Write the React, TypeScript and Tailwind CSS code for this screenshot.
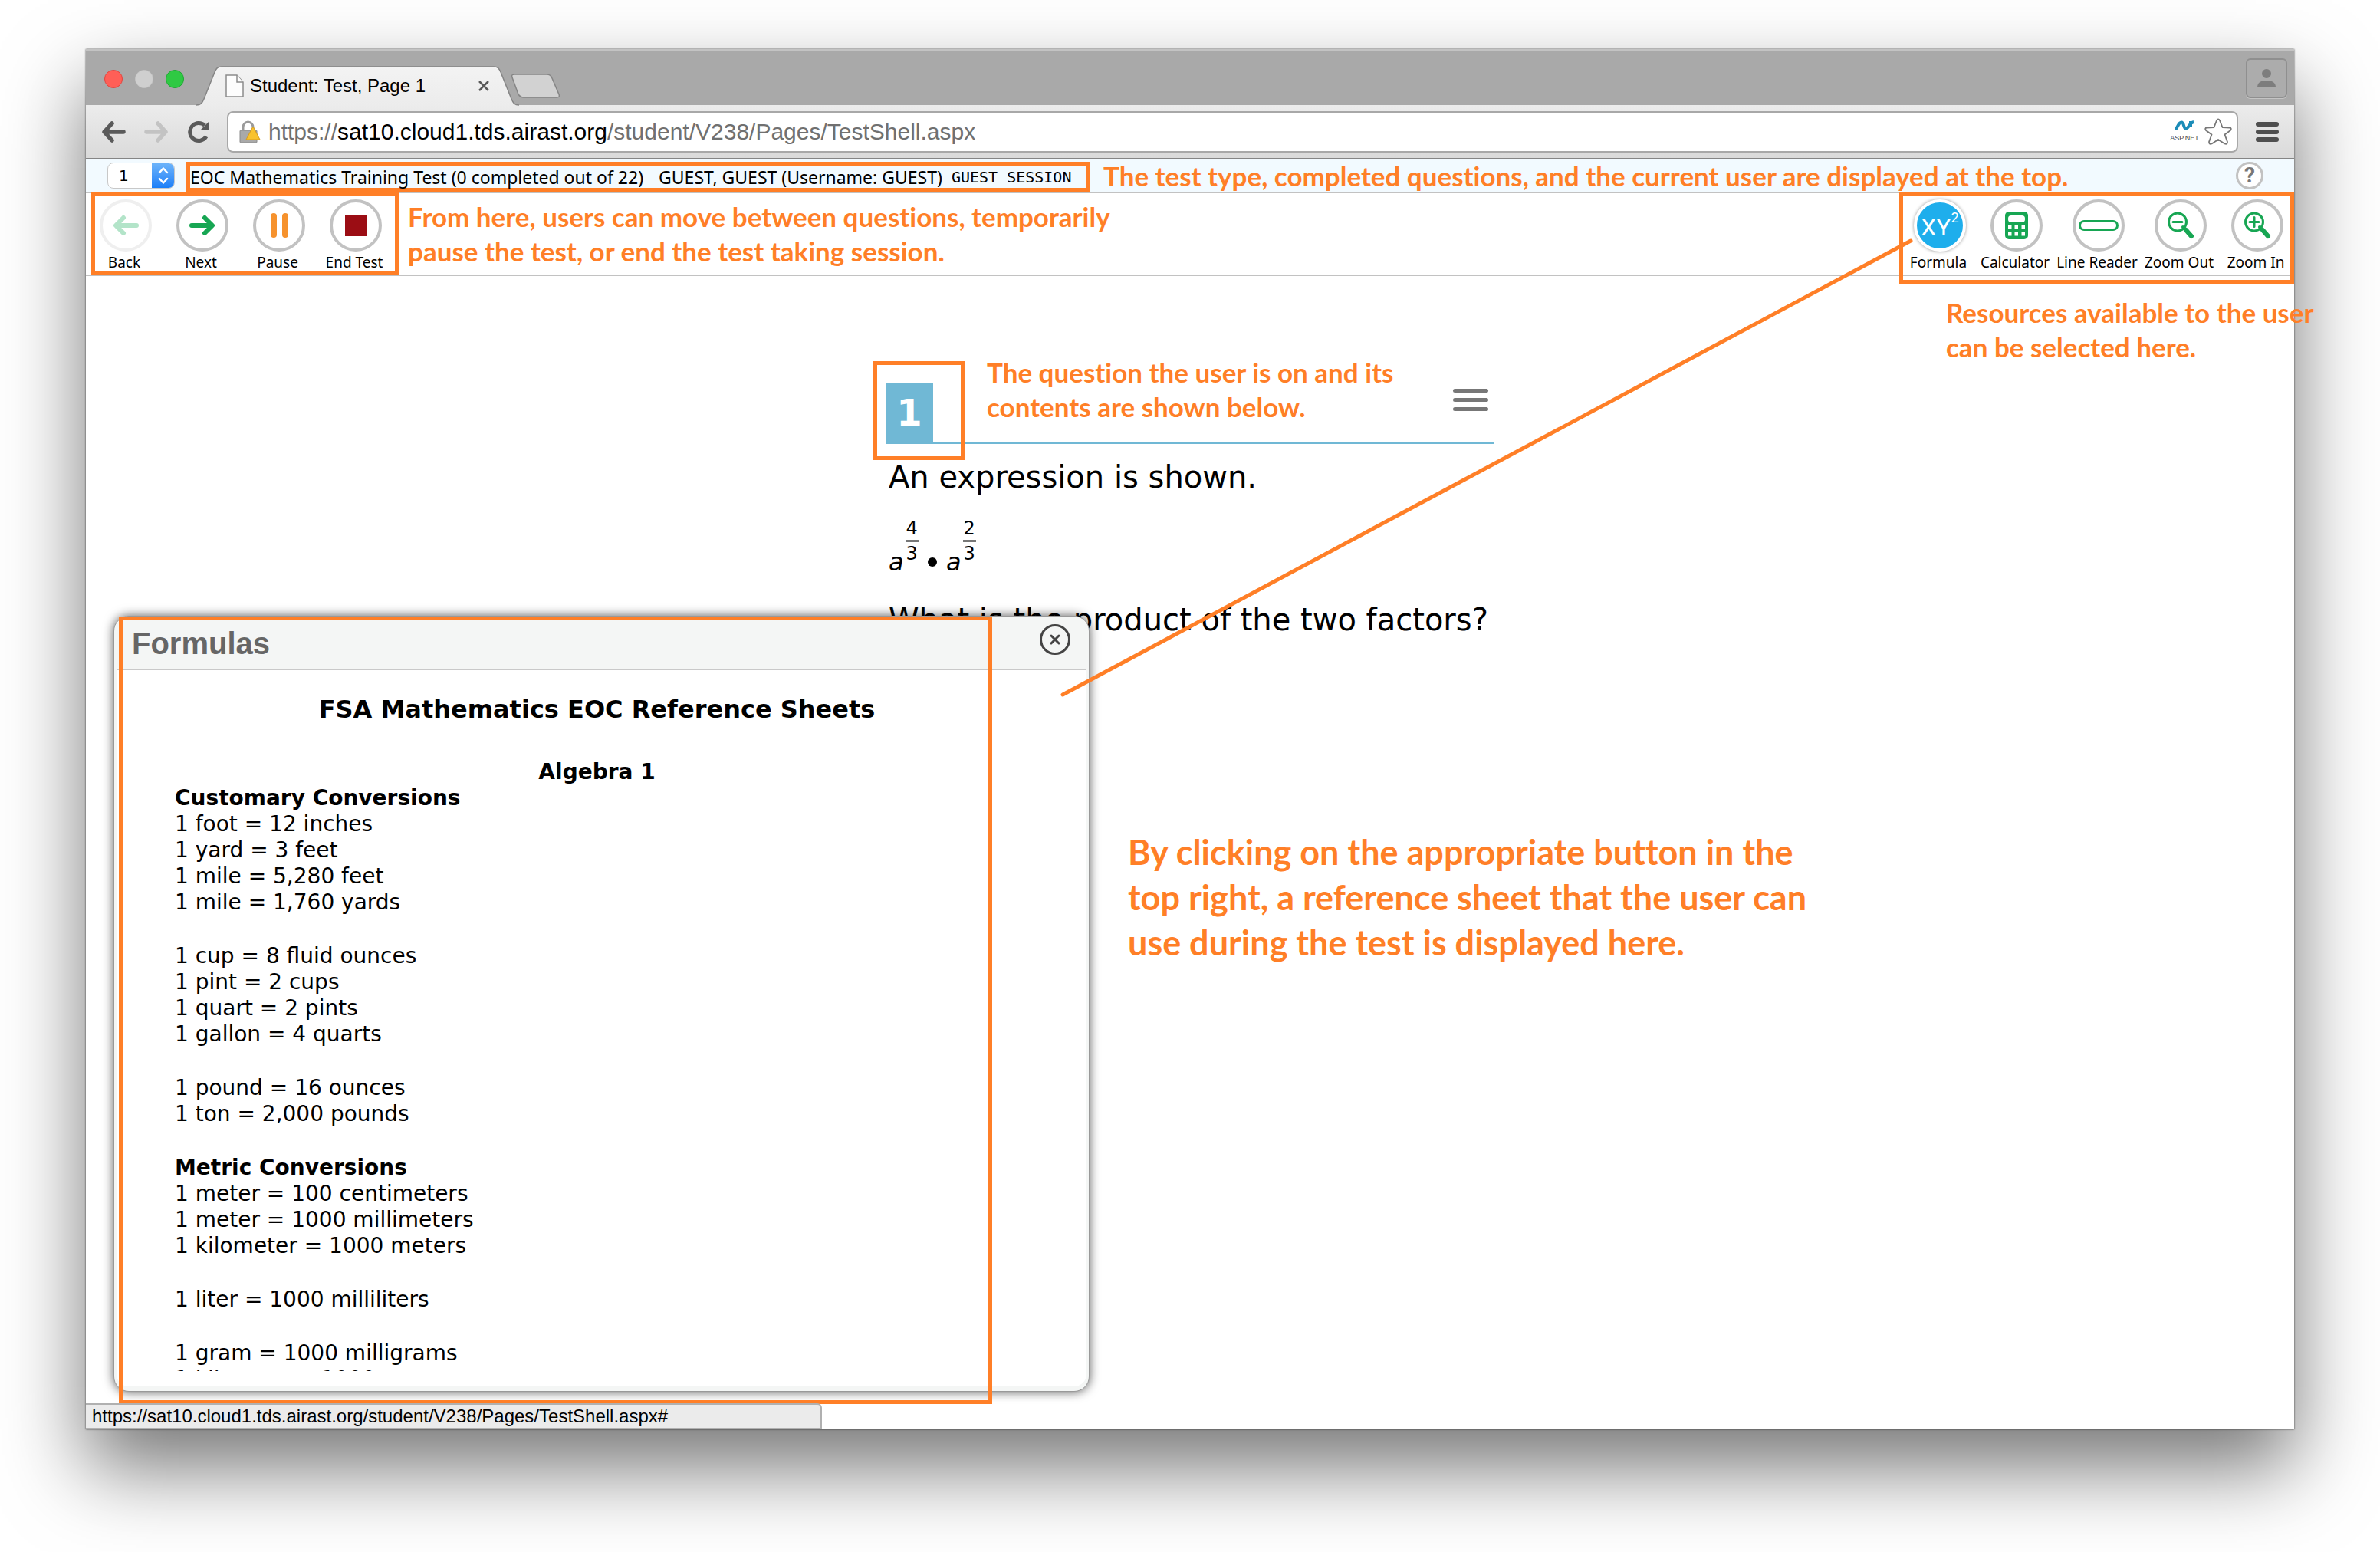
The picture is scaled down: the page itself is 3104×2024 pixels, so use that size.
import React from "react";

const ORANGE_TEXT = "font-['Lato',sans-serif] font-bold text-[#ff7f27] [font-variant-ligatures:none]";
const VERDANA = "font-['Verdana','DejaVu_Sans',sans-serif]";
const LUCIDA = "font-['Lucida_Grande','Noto_Sans',sans-serif]";

function TrafficLights() {
  return (
    <div className="flex items-center gap-4 pl-6 pt-1">
      <button aria-label="Close window" className="size-6 rounded-full border border-[#e2463f] bg-[#ff5f57]" />
      <button aria-label="Minimize window" className="size-6 rounded-full border border-[#c4c4c4] bg-[#cfcfcf]" />
      <button aria-label="Zoom window" className="size-6 rounded-full border border-[#1fa833] bg-[#2fc943]" />
    </div>
  );
}

function TabStrip() {
  return (
    <div className="flex h-[73px] items-stretch bg-[#a9a9a9] shadow-[inset_0_2px_0_#c3c3c3]">
      <TrafficLights />
      <div className="relative ml-4 mt-[22px] flex h-[52px] w-[422px] items-center">
        <svg viewBox="0 0 422 52" className="absolute inset-0 h-full w-full" fill="none" aria-hidden="true">
          <defs>
            <linearGradient id="tab" x1="0" y1="0" x2="0" y2="1">
              <stop offset="0" stopColor="#f3f3f3" />
              <stop offset="1" stopColor="#ececec" />
            </linearGradient>
          </defs>
          <path
            d="M0 51C6 51 8 48 10 43L24 8C26 3 28 1 33 1H388C393 1 395 3 397 8L411 43C413 48 415 51 421 51"
            fill="url(#tab)"
            stroke="#858585"
            strokeWidth="1.5"
          />
        </svg>
        <svg viewBox="0 0 24 30" className="relative ml-[38px] h-[30px] w-6" fill="#fdfdfd" stroke="#8c8c8c" strokeWidth="1.5" aria-hidden="true">
          <path d="M1 1H15L23 10V29H1Z" />
          <path d="M15 1V10H23" />
        </svg>
        <span className="relative ml-2 font-['Liberation_Sans',sans-serif] text-[24px] leading-7 text-black">Student: Test, Page 1</span>
        <button aria-label="Close tab" className="absolute right-9 p-1">
          <svg viewBox="0 0 14 14" className="size-3.5" stroke="#5a5a5a" strokeWidth="2.500" aria-hidden="true">
            <path d="M1 1L13 13M13 1L1 13" />
          </svg>
        </button>
      </div>
      <button aria-label="New tab" className="-ml-3 mt-8 h-8 w-16">
        <svg viewBox="0 0 64 32" className="h-8 w-16" fill="#d2d2d2" stroke="#858585" strokeWidth="1.5" aria-hidden="true">
          <path d="M5 1H47C51 1 53 3 54 6L63 27C64 30 63 31 60 31H17C14 31 12 30 10 27L2 5C1 2 2 1 5 1Z" />
        </svg>
      </button>
      <button aria-label="Profile" className="ml-auto mr-[9px] mt-3 flex h-[52px] w-[54px] items-center justify-center rounded-md border-2 border-[#8f8f8f] bg-[#acacac] shadow-[0_1px_0_#c4c4c4]">
        <svg viewBox="0 0 24 25" className="h-[25px] w-6" fill="#7d7d7d" aria-hidden="true">
          <circle cx="12" cy="6" r="6" />
          <path d="M0 24C0 18 4 15 12 15S24 18 24 24Z" />
        </svg>
      </button>
    </div>
  );
}

function ArrowIcon({ className }: { className: string }) {
  return (
    <svg viewBox="0 0 32 28" className={className} fill="none" stroke="currentColor" strokeWidth="5.5" strokeLinecap="round" strokeLinejoin="round" aria-hidden="true">
      <path d="M14 3L4 14L14 25M5 14H29" />
    </svg>
  );
}

function AddressBar() {
  return (
    <div className="flex h-[71px] items-center border-b-2 border-[#858585] bg-linear-to-b from-[#ececec] to-[#dadada] pl-5">
      <button aria-label="Back" className="text-[#5a5a5a]">
        <ArrowIcon className="h-7 w-8" />
      </button>
      <button aria-label="Forward" disabled className="ml-6 text-[#c3c3c3]">
        <ArrowIcon className="h-7 w-8 rotate-180" />
      </button>
      <button aria-label="Reload" className="ml-6 text-[#5a5a5a]">
        <svg viewBox="0 0 30 30" className="size-[30px]" aria-hidden="true">
          <path d="M25 21A11.5 11.5 0 1 1 23 6.500" fill="none" stroke="currentColor" strokeWidth="5" />
          <path d="M29 1V13H17Z" fill="currentColor" />
        </svg>
      </button>
      <div className="ml-[22px] flex h-[54px] flex-1 items-center rounded-lg border-2 border-[#a8a8a8] bg-white pl-3.5 pr-1.5">
        <svg viewBox="0 0 28 30" className="h-[30px] w-7" aria-hidden="true">
          <path d="M5 14V9A6.500 7 0 0 1 18 9V14" fill="none" stroke="#9a9a9a" strokeWidth="3" />
          <rect x="1" y="13" width="22" height="16" rx="1" fill="#a9a9a9" stroke="#8a8a8a" />
          <path d="M18 8L27 25H9Z" fill="#f8c22e" stroke="#d69b1c" strokeLinejoin="round" />
        </svg>
        <div role="textbox" aria-label="Address" className="ml-2.5 flex-1 font-['Liberation_Sans',sans-serif] text-[30px] leading-9 text-[#707070]">
          https://<span className="text-black">sat10.cloud1.tds.airast.org</span>/student/V238/Pages/TestShell.aspx
        </div>
        <div className="flex w-9 flex-col items-center">
          <svg viewBox="0 0 28 13" className="h-[13px] w-7" fill="none" aria-hidden="true">
            <path d="M2 12C5 10 6 2.500 10 2.500S12 10.500 16 10.500S20 3 26 2M22 1V9" stroke="#1b8cb8" strokeWidth="4" />
          </svg>
          <span className="mt-1 font-['Liberation_Sans',sans-serif] text-[9px] leading-3 text-[#444]">ASP.NET</span>
        </div>
        <button aria-label="Bookmark this page" className="ml-2">
          <svg viewBox="0 0 36 35" className="h-[35px] w-9" fill="#fff" stroke="#777" strokeWidth="1.8" strokeLinejoin="round" aria-hidden="true">
            <path d="M16 3Q18 0 20 3L23.500 12L33 12.500Q36 13 34 16L26.500 21.500L30 31Q30 35 26.500 33.500L18 28L9.500 33.500Q6 35 6 31L9.500 21.500L2 16Q0 13 3 12.500L12.500 12Z" />
          </svg>
        </button>
      </div>
      <button aria-label="Menu" className="ml-[23px] mr-5 flex w-[30px] flex-col gap-1">
        <span className="h-1.5 rounded-full bg-[#4f4f4f]" />
        <span className="h-1.5 rounded-full bg-[#4f4f4f]" />
        <span className="h-1.5 rounded-full bg-[#4f4f4f]" />
      </button>
    </div>
  );
}

function TestHeader() {
  return (
    <div className="flex h-11 items-center border-b-2 border-[#c2c2c2] bg-[#f2faff] pl-7">
      <div className="relative h-[34px] w-[88px] overflow-hidden rounded-lg border border-[#c8c8c8] bg-white">
        <select aria-label="Question number" defaultValue="1" className={`h-full w-full appearance-none bg-transparent pl-3.5 text-[20px] leading-8 text-black ${VERDANA}`}>
          <option>1</option>
          <option>2</option>
          <option>3</option>
        </select>
        <span className="pointer-events-none absolute inset-y-0 right-0 flex w-[29px] items-center justify-center bg-linear-to-b from-[#6bb3fa] to-[#1a7ff8]">
          <svg viewBox="0 0 14 22" className="h-[22px] w-3.5" fill="none" stroke="#fff" strokeWidth="2.500" strokeLinecap="round" strokeLinejoin="round" aria-hidden="true">
            <path d="M2 7L7 1.500L12 7M2 15L7 20.500L12 15" />
          </svg>
        </span>
      </div>
      <div className="ml-[15px] mt-[3px] flex h-[39px] w-[1179px] items-center whitespace-pre border-[5px] border-[#ff7f27] text-black">
        <span className={`text-[23px] leading-7 ${LUCIDA}`}>EOC Mathematics Training Test (0 completed out of 22)</span>
        <span className={`ml-5 text-[23px] leading-7 ${LUCIDA}`}>GUEST, GUEST (Username: GUEST)</span>
        <span className="ml-3 font-['DejaVu_Sans_Mono',monospace] text-[20px] leading-7">GUEST SESSION</span>
      </div>
      <p className={`ml-[17px] whitespace-nowrap text-[35px] leading-10 ${ORANGE_TEXT}`}>
        The test type, completed questions, and the current user are displayed at the top.
      </p>
      <button aria-label="Help" className="ml-auto mr-10 flex size-9 items-center justify-center rounded-full border-[3px] border-[#c2c2c2] bg-white font-['Roboto',sans-serif] text-[28px] font-bold leading-8 text-[#777]">
        ?
      </button>
    </div>
  );
}

function ToolButton({ label, wide, disabled, active, children }: { label: string; wide?: boolean; disabled?: boolean; active?: boolean; children: React.ReactNode }) {
  return (
    <button disabled={disabled} className={`flex flex-col items-center pt-2 ${wide ? "w-[114px]" : "w-[100px]"}`}>
      <span
        className={`ml-1 flex size-[68px] items-center justify-center rounded-full border-4 ${
          active ? "border-white bg-[#1eaeec] shadow-[0_0_4px_#999]" : disabled ? "border-[#efefef] bg-white" : "border-[#c2c2c2] bg-white"
        }`}
      >
        {children}
      </span>
      <span className={`mt-0.5 whitespace-nowrap text-[19px] leading-6 text-black ${LUCIDA}`}>{label}</span>
    </button>
  );
}

function ThickArrow({ className }: { className: string }) {
  return (
    <svg viewBox="0 0 34 26" className={className} fill="none" stroke="currentColor" strokeWidth="6" strokeLinecap="round" strokeLinejoin="round" aria-hidden="true">
      <path d="M20 3L30 13L20 23M3 13H29" />
    </svg>
  );
}

function Magnifier({ plus }: { plus?: boolean }) {
  return (
    <svg viewBox="0 0 36 36" className="size-9" fill="none" stroke="#17a653" strokeLinecap="round" aria-hidden="true">
      <circle cx="14" cy="13.500" r="11.500" strokeWidth="3" />
      <path d="M25 24L32 32" strokeWidth="6" />
      <path d="M21 20L25 24" strokeWidth="4" />
      <path d={plus ? "M8 13.500H20M14 7.500V19.500" : "M8 13.500H20"} strokeWidth="3" />
    </svg>
  );
}

function TestToolbar() {
  return (
    <div className="relative flex h-[108px] items-start justify-between border-b-2 border-[#c2c2c2]">
      <div className="flex">
        <nav aria-label="Test navigation" className="flex">
          <ToolButton label="Back" disabled>
            <ThickArrow className="h-[26px] w-[34px] rotate-180 text-[#b3e4c9]" />
          </ToolButton>
          <ToolButton label="Next">
            <ThickArrow className="h-[26px] w-[34px] text-[#17a653]" />
          </ToolButton>
          <ToolButton label="Pause">
            <span className="flex gap-[7px]">
              <span className="h-8 w-2 rounded-full bg-[#f6922d]" />
              <span className="h-8 w-2 rounded-full bg-[#f6922d]" />
            </span>
          </ToolButton>
          <ToolButton label="End Test">
            <span className="size-7 bg-[#9b0d14]" />
          </ToolButton>
        </nav>
        <p className={`ml-5 mt-2 text-[35px] leading-[45px] ${ORANGE_TEXT}`}>
          From here, users can move between questions, temporarily
          <br />
          pause the test, or end the test taking session.
        </p>
      </div>
      <div role="toolbar" aria-label="Resources" className="flex">
        <ToolButton label="Formula" active>
          <span className="flex font-['Roboto',sans-serif] text-white">
            <span className="pt-1 text-[32px] leading-9">XY</span>
            <sup className="top-0 text-[18px] leading-5">2</sup>
          </span>
        </ToolButton>
        <ToolButton label="Calculator">
          <svg viewBox="0 0 30 36" className="h-9 w-[30px]" aria-hidden="true">
            <rect width="30" height="36" rx="5" fill="#17a653" />
            <rect x="4" y="5" width="22" height="9" rx="4" fill="#fff" />
            <path d="M4 18H8.500V22.500H4ZM12.500 18H17V22.500H12.500ZM21.500 18H26V22.500H21.500ZM4 27H8.500V31.500H4ZM12.500 27H17V31.500H12.500ZM21.500 27H26V31.500H21.500Z" fill="#fff" />
          </svg>
        </ToolButton>
        <ToolButton label="Line Reader" wide>
          <span className="h-3.5 w-[52px] rounded-full border-[3px] border-[#17a653]" />
        </ToolButton>
        <ToolButton label="Zoom Out">
          <Magnifier />
        </ToolButton>
        <ToolButton label="Zoom In">
          <Magnifier plus />
        </ToolButton>
      </div>
      <div className="pointer-events-none absolute -top-px left-[7px] h-[107px] w-[401px] border-[5px] border-[#ff7f27]" />
      <div className="pointer-events-none absolute -top-px right-0 h-[119px] w-[515px] border-[5px] border-[#ff7f27]" />
    </div>
  );
}

function Power({ top }: { top: string }) {
  return (
    <span className="flex items-end">
      <i className="text-[32px] leading-8">a</i>
      <span className="mb-4 ml-0.5 flex flex-col items-center text-[24px] leading-[22px]">
        <span className="border-b-[3px] border-[#777] px-px pb-1">{top}</span>
        <span className="pt-1">3</span>
      </span>
    </span>
  );
}

function Question() {
  return (
    <main className={`mx-auto w-[794px] pt-[111px] text-black ${VERDANA}`}>
      <div className="relative flex h-[108px] items-end justify-between border-b-[3px] border-[#70b8d5]">
        <h1 className="flex h-[76px] w-[62px] items-center justify-center bg-[#70b8d5] text-[48px] font-bold leading-none text-white">1</h1>
        <p className={`absolute -top-2 left-[132px] whitespace-nowrap text-[35px] leading-[45px] ${ORANGE_TEXT}`}>
          The question the user is on and its
          <br />
          contents are shown below.
        </p>
        <button aria-label="Question menu" className="mb-10 mr-2 flex w-[46px] flex-col gap-[7px]">
          <span className="h-[5px] rounded-full bg-[#777]" />
          <span className="h-[5px] rounded-full bg-[#777]" />
          <span className="h-[5px] rounded-full bg-[#777]" />
        </button>
        <div className="pointer-events-none absolute -left-4 top-0 h-[129px] w-[119px] border-[5px] border-[#ff7f27]" />
      </div>
      <div className="pl-1">
        <p className="mt-5 text-[40px] leading-[46px]">An expression is shown.</p>
        <div className="mt-[34px] flex h-[70px] items-end gap-3">
          <Power top="4" />
          <span className="mb-2.5 size-3 rounded-full bg-black" />
          <Power top="2" />
        </div>
        <p className="mt-9 whitespace-nowrap text-[40px] leading-[46px]">What is the product of the two factors?</p>
      </div>
    </main>
  );
}

const GROUPS: { title?: string; rows: string[] }[] = [
  { title: "Customary Conversions", rows: ["1 foot = 12 inches", "1 yard = 3 feet", "1 mile = 5,280 feet", "1 mile = 1,760 yards"] },
  { rows: ["1 cup = 8 fluid ounces", "1 pint = 2 cups", "1 quart = 2 pints", "1 gallon = 4 quarts"] },
  { rows: ["1 pound = 16 ounces", "1 ton = 2,000 pounds"] },
  { title: "Metric Conversions", rows: ["1 meter = 100 centimeters", "1 meter = 1000 millimeters", "1 kilometer = 1000 meters"] },
  { rows: ["1 liter = 1000 milliliters"] },
  { rows: ["1 gram = 1000 milligrams", "1 kilogram = 1000 grams"] },
];

function FormulaDialog() {
  return (
    <>
      <section aria-label="Formulas" className="absolute bottom-[49px] left-9 flex h-[1012px] w-[1273px] flex-col rounded-[20px] border border-[#999] bg-[#f4f6f5] px-[3px] pb-1.5 shadow-[0_0_14px_rgba(0,0,0,0.65)]">
        <header className="flex h-[70px] items-center justify-between border-b-2 border-[#c9c9c9] pl-5 pr-[21px]">
          <h2 className="mt-0.5 font-['Liberation_Sans',sans-serif] text-[40px] font-bold leading-[48px] text-[#666]">Formulas</h2>
          <button aria-label="Close formulas" className="mb-2 flex size-10 items-center justify-center rounded-full border-[3px] border-[#444] text-[#444]">
            <svg viewBox="0 0 14 14" className="size-3.5" stroke="currentColor" strokeWidth="3" strokeLinecap="round" aria-hidden="true">
              <path d="M2 2L12 12M12 2L2 12" />
            </svg>
          </button>
        </header>
        <div className="min-h-0 flex-1 rounded-b-2xl bg-white pb-5">
          <div className={`h-full overflow-hidden pl-[76px] pr-[88px] pt-[31px] text-[28px] leading-[34px] text-black ${VERDANA}`}>
            <h3 className="text-center text-[32px] font-bold leading-10">FSA Mathematics EOC Reference Sheets</h3>
            <h4 className="mt-[45px] text-center font-bold">Algebra 1</h4>
            <div className="flex flex-col gap-9">
              {GROUPS.map((group) => (
                <div key={group.rows[0]}>
                  {group.title && <h5 className="font-bold">{group.title}</h5>}
                  {group.rows.map((row) => (
                    <p key={row}>{row}</p>
                  ))}
                </div>
              ))}
            </div>
          </div>
        </div>
      </section>
      <div className="pointer-events-none absolute bottom-[33px] left-[43px] h-[1027px] w-[1139px] border-[5px] border-[#ff7f27]" />
    </>
  );
}

export default function App() {
  return (
    <div className="flex min-h-screen flex-col overflow-hidden bg-white px-28 pb-40 pt-16">
      <div className="relative flex flex-1 flex-col bg-white shadow-[0_0_2px_rgba(0,0,0,0.7),0_50px_100px_rgba(0,0,0,0.54)]">
        <TabStrip />
        <AddressBar />
        <TestHeader />
        <TestToolbar />
        <Question />
        <FormulaDialog />
        <svg viewBox="0 0 1112 598" className="pointer-events-none absolute right-[497px] top-[247px] h-[598px] w-[1112px]" stroke="#ff7f27" strokeWidth="5" strokeLinecap="round" aria-hidden="true">
          <path d="M1109 3L3 595" />
        </svg>
        <p className={`absolute -right-6 top-[321px] w-[478px] whitespace-nowrap text-[35px] leading-[45px] ${ORANGE_TEXT}`}>
          Resources available to the user
          <br />
          can be selected here.
        </p>
        <p className={`absolute left-[1359px] top-[1018px] whitespace-nowrap text-[45px] leading-[59px] ${ORANGE_TEXT}`}>
          By clicking on the appropriate button in the
          <br />
          top right, a reference sheet that the user can
          <br />
          use during the test is displayed here.
        </p>
        <div className="absolute bottom-0 left-0 flex h-[34px] w-[960px] items-center rounded-tr-md border-2 border-l-0 border-[#b0b0b0] bg-[#ebebeb] pl-2 font-['Liberation_Sans',sans-serif] text-[24px] leading-7 text-black">
          https://sat10.cloud1.tds.airast.org/student/V238/Pages/TestShell.aspx#
        </div>
      </div>
    </div>
  );
}
